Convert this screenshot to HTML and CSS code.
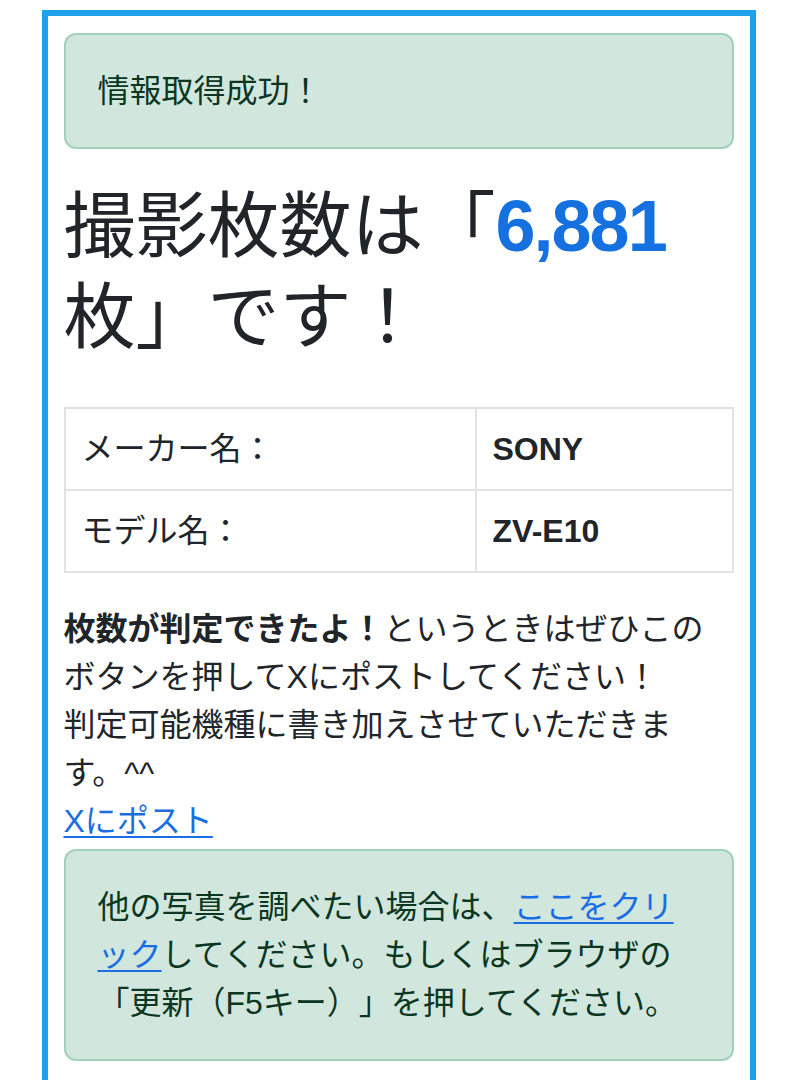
FILE: index.html
```html
<!DOCTYPE html>
<html lang="ja">
<head>
<meta charset="utf-8">
<title>撮影枚数</title>
<link rel="stylesheet" href="styles.css">
</head>
<body>
<div class="frame">
  <div class="alert">情報取得成功！</div>
  <h1 class="title">撮影枚数は「<b class="count">6,881</b>枚」です！</h1>
  <table class="info">
    <tr><td class="label">メーカー名：</td><td class="value">SONY</td></tr>
    <tr><td class="label">モデル名：</td><td class="value">ZV-E10</td></tr>
  </table>
  <p class="note"><b>枚数が判定できたよ！</b>というときはぜひこのボタンを押してXにポストしてください！<br>判定可能機種に書き加えさせていただきます。^^<br><a class="link" href="#">Xにポスト</a></p>
  <div class="alert alert-bottom">他の写真を調べたい場合は、<a class="link" href="#">ここをクリック</a>してください。もしくはブラウザの「更新（F5キー）」を押してください。</div>
</div>
</body>
</html>
```

FILE: styles.css
```css
html, body {
  margin: 0;
  padding: 0;
  background: #ffffff;
}
body {
  font-family: "Liberation Sans", "Noto Sans CJK JP", sans-serif;
  font-size: 32px;
  line-height: 48px;
  color: #212529;
  text-spacing-trim: space-all;
}
.frame {
  width: 714px;
  box-sizing: border-box;
  margin: 10px auto 0;
  border: 6px solid #1ea1ea;
  border-bottom: none;
  padding: 17px 16px 40px;
  min-height: 1080px;
}
.alert {
  background: #d1e7dd;
  border: 2px solid #a3cfbb;
  border-radius: 12px;
  color: #0a3622;
  padding: 32px;
  margin: 0 0 32px;
}
.alert-bottom {
  margin-top: 4px;
}
.title {
  font-size: 72px;
  line-height: 91px;
  font-weight: 400;
  margin: 0 0 44px;
  color: #212529;
}
.count {
  color: #1570e0;
  font-weight: 700;
  letter-spacing: -2px;
}
.info {
  width: 100%;
  border-collapse: collapse;
  margin: 0 0 32px;
}
.info td {
  border: 2px solid #e0e2e4;
  padding: 16px;
  vertical-align: middle;
}
.info .label {
  width: 377px;
}
.info .value {
  font-weight: 700;
}
.note {
  margin: 0;
  padding-right: 22px;
}
.note b {
  font-weight: 700;
}
.link {
  color: #1a6ee3;
  text-decoration: underline;
  text-decoration-thickness: 2px;
  text-underline-offset: 4px;
}
```
